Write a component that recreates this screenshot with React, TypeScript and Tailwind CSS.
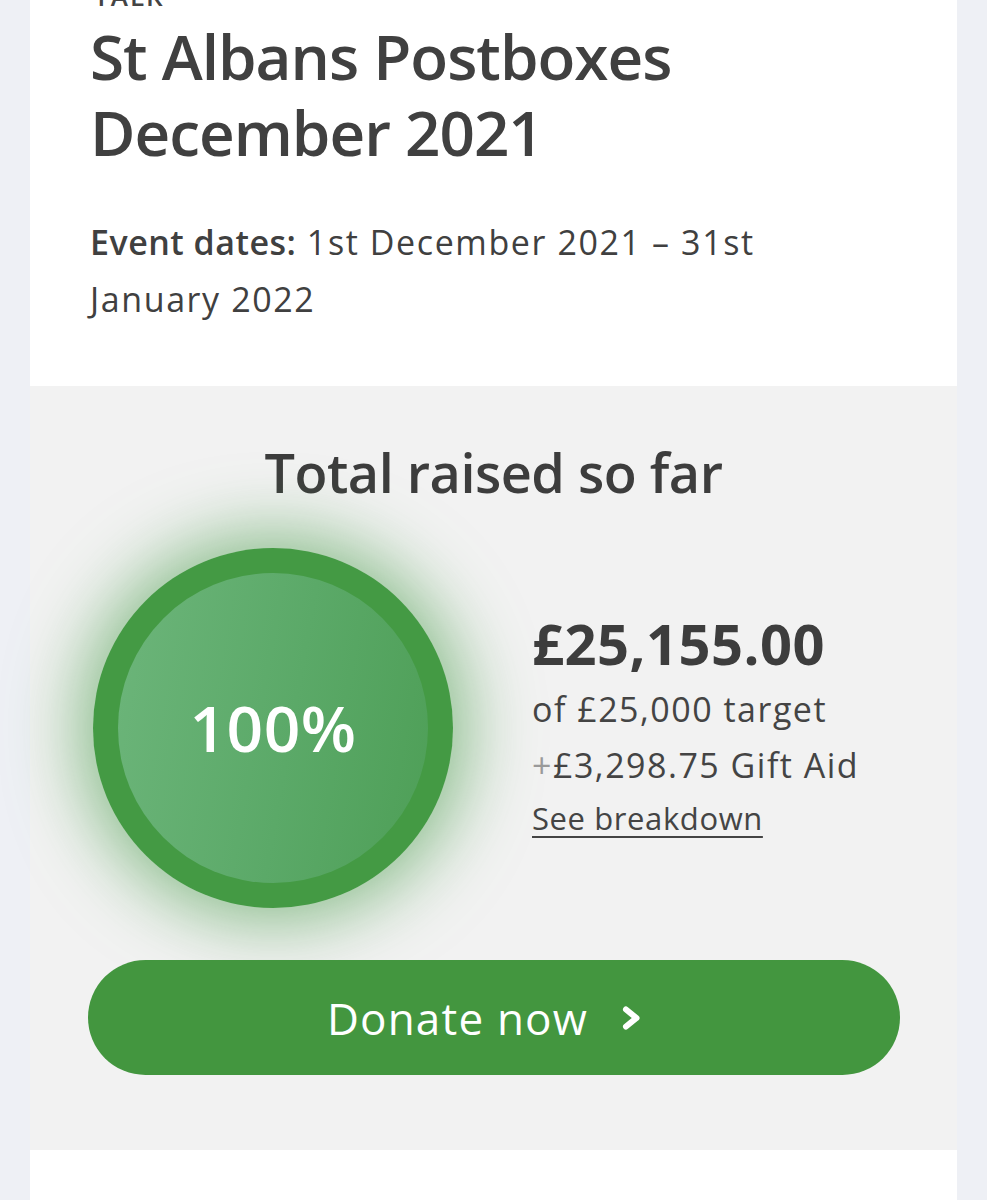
import React from "react";

export default function App() {
  return (
    <div
      className="min-h-[1200px] w-[987px] overflow-hidden bg-[#eef0f5] px-[30px] text-[#3d3d3d]"
      style={{ fontFamily: "'Open Sans', Lato, sans-serif" }}
    >
      <div className="bg-white pl-[60px] pr-[40px] pb-[58px]">
        <div className="-mt-[14px] ml-[4px] h-[20px] text-[26px] font-semibold leading-[20px] tracking-[2px] text-[#444]">TALK</div>
        <h1 className="mt-[12px] text-[62px] font-semibold leading-[76px] tracking-[-1px] text-[#404040]">
          St Albans Postboxes
          <br />
          December 2021
        </h1>
        <p className="mt-[44px] text-[34px] leading-[57px] tracking-[1.6px] text-[#404040]">
          <span className="font-semibold tracking-[0.5px]">Event dates:</span> 1st December 2021 – 31st
          <br />
          January 2022
        </p>
      </div>

      <div className="flex h-[764px] flex-col items-center bg-[#f2f2f2] pt-[54px]">
        <h2 className="text-[54px] font-semibold leading-[64px] tracking-[-0.5px] text-[#3d3d3d]">Total raised so far</h2>

        <div className="mt-[44px] flex w-full items-center pl-[63px]">
          <div className="flex h-[360px] w-[360px] items-center justify-center rounded-full bg-[#449a44] shadow-[0_0_70px_14px_rgba(67,154,68,0.6)]">
            <div className="flex h-[310px] w-[310px] items-center justify-center rounded-full bg-[linear-gradient(100deg,#6cb57a_0%,#5ba968_55%,#4e9f57_100%)]">
              <span className="text-[64px] font-semibold tracking-[0.5px] text-white">100%</span>
            </div>
          </div>

          <div className="ml-[79px] flex flex-col">
            <div className="text-[56px] font-bold leading-[60px] tracking-[0.5px] text-[#3d3d3d]">£25,155.00</div>
            <div className="mt-[8px] text-[34px] leading-[56px] tracking-[1.5px] text-[#444]">of £25,000 target</div>
            <div className="text-[34px] leading-[56px] tracking-[1.5px] text-[#444]">
              <span className="text-[#9a9a9a]">+</span>£3,298.75 Gift Aid
            </div>
            <div className="text-[31px] leading-[50px] tracking-[0.6px] text-[#444] underline decoration-[2px] underline-offset-[6px]">
              See breakdown
            </div>
          </div>
        </div>

        <button className="mt-[52px] flex h-[115px] w-[812px] items-center justify-center gap-[32px] rounded-full bg-[#43963f] pr-[18px] text-[44px] tracking-[1.2px] text-white">
          <span>Donate now</span>
          <svg width="22" height="24" viewBox="0 0 22 24" fill="none">
            <path d="M6 3.5 L16.5 12 L6 20.5" stroke="white" strokeWidth="6" strokeLinecap="round" strokeLinejoin="round" />
          </svg>
        </button>
      </div>

      <div className="h-[60px] bg-white" />
    </div>
  );
}
